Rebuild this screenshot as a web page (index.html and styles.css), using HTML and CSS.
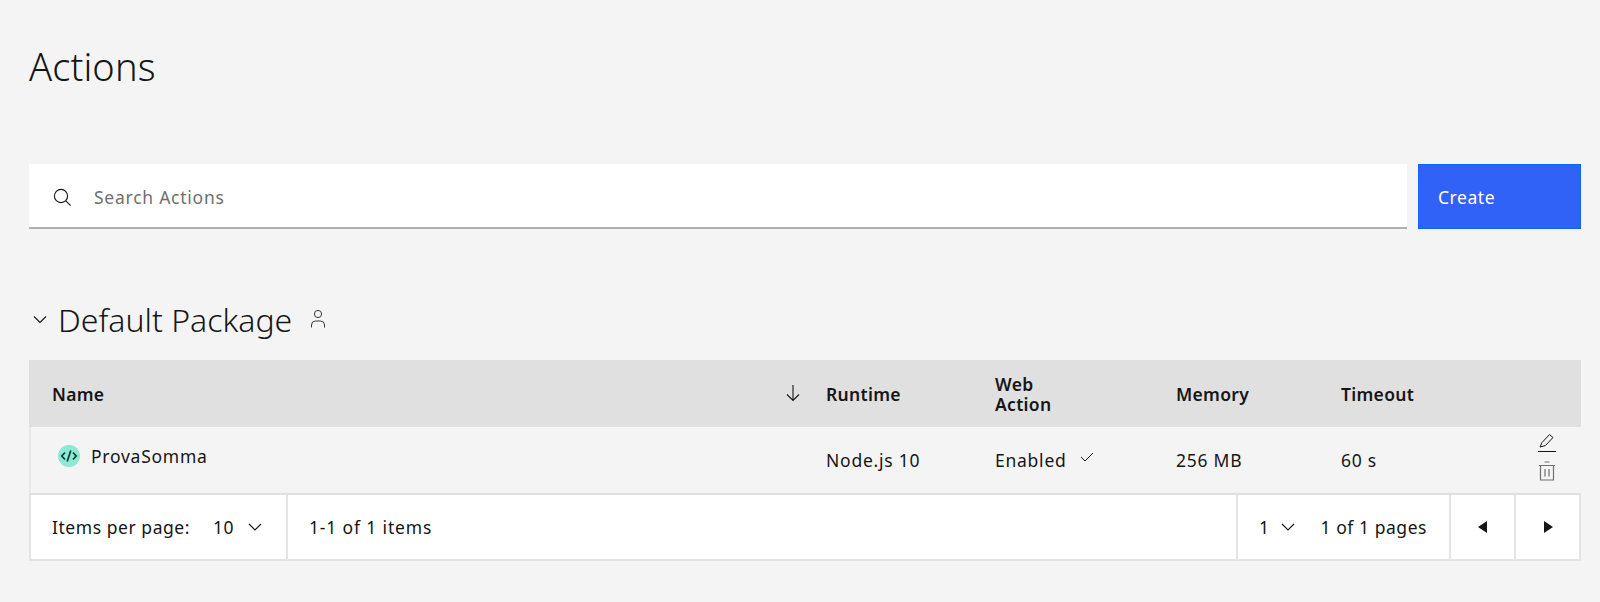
FILE: index.html
```html
<!DOCTYPE html>
<html lang="en">
<head>
    <meta charset="UTF-8">
    <title>Actions</title>
    <link rel="stylesheet" href="styles.css">
</head>
<body>
<div class="page">
    <h1 class="title">Actions</h1>

    <!-- search + create -->
    <div class="toolbar">
        <div class="search">
            <svg class="search-icon" width="20" height="20" viewBox="0 0 20 20" fill="none" stroke="#161616" stroke-width="1.1"><circle cx="9" cy="9" r="6.6"/><path d="M13.8 13.8L18.6 18.6"/></svg>
            <span class="search-text">Search Actions</span>
        </div>
        <div class="create">Create</div>
    </div>

    <!-- package title -->
    <div class="package">
        <svg class="package-chevron" width="16" height="16" viewBox="0 0 16 16" fill="none" stroke="#161616" stroke-width="1.1"><path d="M2 5.5L8 11.5L14 5.5"/></svg>
        <h2 class="package-name">Default Package</h2>
        <svg class="package-user" width="16" height="20" viewBox="0 0 16 20" fill="none" stroke="#393939" stroke-width="1"><circle cx="8" cy="5" r="3.6"/><path d="M1.5 18.5V16A4 4 0 0 1 5.500 12H10.500A4 4 0 0 1 14.500 16V18.500"/></svg>
    </div>

    <div class="table">
        <div class="row head">
            <div class="cell cell-name">Name
                <svg class="sort" width="16" height="18" viewBox="0 0 16 18" fill="none" stroke="#161616" stroke-width="1.1"><path d="M8 1V16.500M2 10.500L8 16.500L14 10.500"/></svg>
            </div>
            <div class="cell">Runtime</div>
            <div class="cell cell-wrap">Web Action</div>
            <div class="cell">Memory</div>
            <div class="cell">Timeout</div>
            <div class="cell"></div>
        </div>
        <div class="row body">
            <div class="cell cell-name">
                <span class="action">
                    <svg width="22" height="22" viewBox="0 0 22 22"><circle cx="11" cy="11" r="11" fill="#8ee8d4"/><path d="M7 7.500L3.800 11L7 14.500M15 7.500L18.200 11L15 14.500M12.800 5.500L9.200 16.500" fill="none" stroke="#0b3b3a" stroke-width="1.700"/></svg>
                    ProvaSomma
                </span>
            </div>
            <div class="cell">Node.js 10</div>
            <div class="cell cell-web">Enabled
                <svg class="check" width="16" height="12" viewBox="0 0 16 12" fill="none" stroke="#161616" stroke-width="1"><path d="M2 6L6 10L14 2"/></svg>
            </div>
            <div class="cell">256 MB</div>
            <div class="cell">60 s</div>
            <div class="row-actions">
                <svg width="20" height="19" viewBox="0 0 20 19" fill="none" stroke="#161616" stroke-width="1"><path d="M1 18.500H19M3 14L5 9.500L12.500 1.500L16 4.500L8.500 12.500L3 14Z"/></svg>
                <svg width="16" height="20" viewBox="0 0 16 20" fill="none" stroke="#6f6f6f" stroke-width="1.200"><path d="M5.500 1H10.500M0 4.500H16M1.500 4.500V19H14.500V4.500M6 8V15.500M10 8V15.500"/></svg>
            </div>
        </div>
        <div class="pager">
            <div class="pager-part pager-size">
                <span>Items per page:</span>
                <span class="pager-val">10</span>
                <svg width="16" height="16" viewBox="0 0 16 16" fill="none" stroke="#161616" stroke-width="1.100"><path d="M2 5L8 11L14 5"/></svg>
            </div>
            <div class="pager-part pager-count">1-1 of 1 items</div>
            <div class="pager-part pager-pages">
                <span>1</span>
                <svg width="16" height="16" viewBox="0 0 16 16" fill="none" stroke="#161616" stroke-width="1.100"><path d="M2 5L8 11L14 5"/></svg>
                <span class="pager-of">1 of 1 pages</span>
            </div>
            <div class="pager-btn"><svg width="10" height="12" viewBox="0 0 10 12"><path d="M9 0V12L0 6Z" fill="#161616"/></svg></div>
            <div class="pager-btn"><svg width="10" height="12" viewBox="0 0 10 12"><path d="M1 0V12L10 6Z" fill="#161616"/></svg></div>
        </div>
    </div>
</div>
</body>
</html>
```

FILE: styles.css
```css
* {
    margin: 0;
    padding: 0;
    box-sizing: border-box;
}

body {
    background-color: #f4f4f4;
    color: #161616;
    font-family: "Noto Sans", sans-serif;
    font-size: 17.5px;
    letter-spacing: 0.55px;
}

.page {
    padding: 0 19px 0 29px;
}

.title {
    font-size: 38px;
    font-weight: 300;
    letter-spacing: 0.1px;
    line-height: 44px;
    padding-top: 44px;
    height: 164px;
}

.toolbar {
    display: flex;
    gap: 11px;
    height: 65px;
}

.search {
    flex: 1;
    display: flex;
    align-items: center;
    background-color: #fff;
    border-bottom: 2px solid #b0b0b0;
    padding-left: 23px;
    padding-top: 2px;
}

.search-icon {
    margin-right: 22px;
}

.search-text {
    color: #6f6f6f;
    letter-spacing: 0.75px;
}

.create {
    width: 163px;
    display: flex;
    align-items: center;
    padding-left: 19px;
    background-color: #3062f7;
    border: 1px solid #0f62fe;
    color: #fff;
}

.package {
    display: flex;
    align-items: center;
    height: 131px;
    padding-top: 49px;
    padding-left: 3px;
}

.package-name {
    font-size: 32px;
    font-weight: 300;
    letter-spacing: 0;
    margin-left: 10px;
    margin-right: 18px;
}

.table {
    width: 100%;
}

.row {
    display: grid;
    grid-template-columns: 797px 169px 181px 165px 1fr 60px;
    align-items: center;
}

.head {
    height: 67px;
    background-color: #e0e0e0;
    font-weight: 600;
    letter-spacing: 0.3px;
    line-height: 20px;
}

.cell-wrap {
    width: 80px;
}

.body {
    height: 68px;
    padding-bottom: 1px;
    border-left: 2px solid #e8e8e8;
    border-bottom: 2px solid #e0e0e0;
    letter-spacing: 0.75px;
}

.body .cell:not(.cell-name) {
    margin-left: -2px;
}

.cell-name {
    padding-left: 23px;
    position: relative;
}

.body .cell-name {
    padding-left: 21px;
}

.sort {
    position: absolute;
    right: 25px;
    top: 0;
}

.action {
    display: inline-flex;
    align-items: center;
    gap: 11px;
    padding-left: 6px;
    margin-top: -4px;
}

.cell-web {
    display: flex;
    align-items: center;
}

.check {
    margin-left: 12px;
    margin-top: -5px;
}

.row-actions {
    justify-self: end;
    display: flex;
    flex-direction: column;
    align-items: center;
    gap: 9px;
    padding-right: 24px;
    padding-bottom: 5px;
}

.pager {
    display: flex;
    height: 66px;
    background-color: #fff;
    border: 2px solid #e4e4e4;
    border-top: 0;
}

.pager-part {
    display: flex;
    align-items: center;
    height: 100%;
    border-right: 2px solid #e4e4e4;
}

.pager-size {
    width: 257px;
    padding-left: 21px;
}

.pager-val {
    margin-left: 23px;
    margin-right: 13px;
}

.pager-count {
    width: 950px;
    padding-left: 21px;
    letter-spacing: 0.85px;
}

.pager-pages {
    width: 213px;
    padding-left: 21px;
}

.pager-pages svg {
    margin-left: 10px;
}

.pager-of {
    margin-left: 25px;
}

.pager-btn {
    flex: 1;
    display: flex;
    align-items: center;
    justify-content: center;
}

.pager-btn + .pager-btn {
    border-left: 2px solid #e4e4e4;
}
```
